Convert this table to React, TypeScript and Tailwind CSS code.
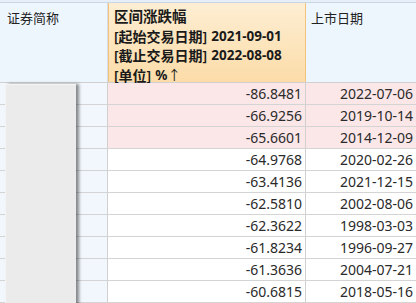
const rows: [string, string, boolean][] = [
  ['-86.8481', '2022-07-06', true],
  ['-66.9256', '2019-10-14', true],
  ['-65.6601', '2014-12-09', true],
  ['-64.9768', '2020-02-26', false],
  ['-63.4136', '2021-12-15', false],
  ['-62.5810', '2002-08-06', false],
  ['-62.3622', '1998-03-03', false],
  ['-61.8234', '1996-09-27', false],
  ['-61.3636', '2004-07-21', false],
  ['-60.6815', '2018-05-16', false],
];

const font = { fontFamily: '"Noto Sans", "Noto Sans CJK SC", sans-serif' };

function HeadLine({ label, value }: { label: string; value: React.ReactNode }) {
  return (
    <div className="flex items-center h-[19.5px] gap-[4px] whitespace-nowrap">
      <span className="text-[14px] leading-[19px] font-semibold">{label}</span>
      <span className="text-[13.5px] leading-[19px] font-bold">{value}</span>
    </div>
  );
}

export default function App() {
  return (
    <div className="relative w-[416px] h-[303px] overflow-hidden bg-white text-[#222]" style={font}>
      <div className="h-[3px] bg-[#e6eef7] border-b border-[#c9d6e4]" />
      <div className="flex h-[80px] border-b border-[#d0d0d0]">
        <div className="w-[108px] bg-[#eef6fd] border-r border-[#d6dde6] pl-[7px] pt-[5px] text-[13px] leading-[20px]">
          证券简称
        </div>
        <div className="w-[198px] bg-gradient-to-b from-[#fdeed3] to-[#fcdca8] border-x border-[#f3c27d] pl-[5px] pt-[4px] text-[#1a1a1a]">
          <div className="flex items-center h-[19.5px] text-[14.5px] leading-[19px] font-bold">区间涨跌幅</div>
          <HeadLine label="[起始交易日期]" value="2021-09-01" />
          <HeadLine label="[截止交易日期]" value="2022-08-08" />
          <HeadLine
            label="[单位]"
            value={
              <>
                %<span className="font-normal">↑</span>
              </>
            }
          />
        </div>
        <div className="flex-1 bg-[#eef6fd] pl-[5px] pt-[5px] text-[13px] leading-[20px]">上市日期</div>
      </div>
      {rows.map(([v, d, hl]) => (
        <div key={d} className="flex h-[22px] border-b border-[#d4d4d4] text-[14px] leading-[21px] text-[#2a2a2a]">
          <div className="w-[108px] bg-[#f1f7fd] border-r border-[#d0d0d0]" />
          <div className={`w-[198px] border-r border-[#d0d0d0] text-right pr-[3px] ${hl ? 'bg-[#fbe6e8]' : 'bg-white'}`}>
            {v}
          </div>
          <div className={`flex-1 text-right pr-[3px] ${hl ? 'bg-[#fbe6e8]' : 'bg-white'}`}>{d}</div>
        </div>
      ))}
      <div className="absolute left-[5px] top-[84px] w-[71px] h-[230px] bg-[#ebebeb] border-l border-t border-[#f4f4f4] shadow-[3px_0_3px_rgba(0,0,0,0.45)]" />
    </div>
  );
}
